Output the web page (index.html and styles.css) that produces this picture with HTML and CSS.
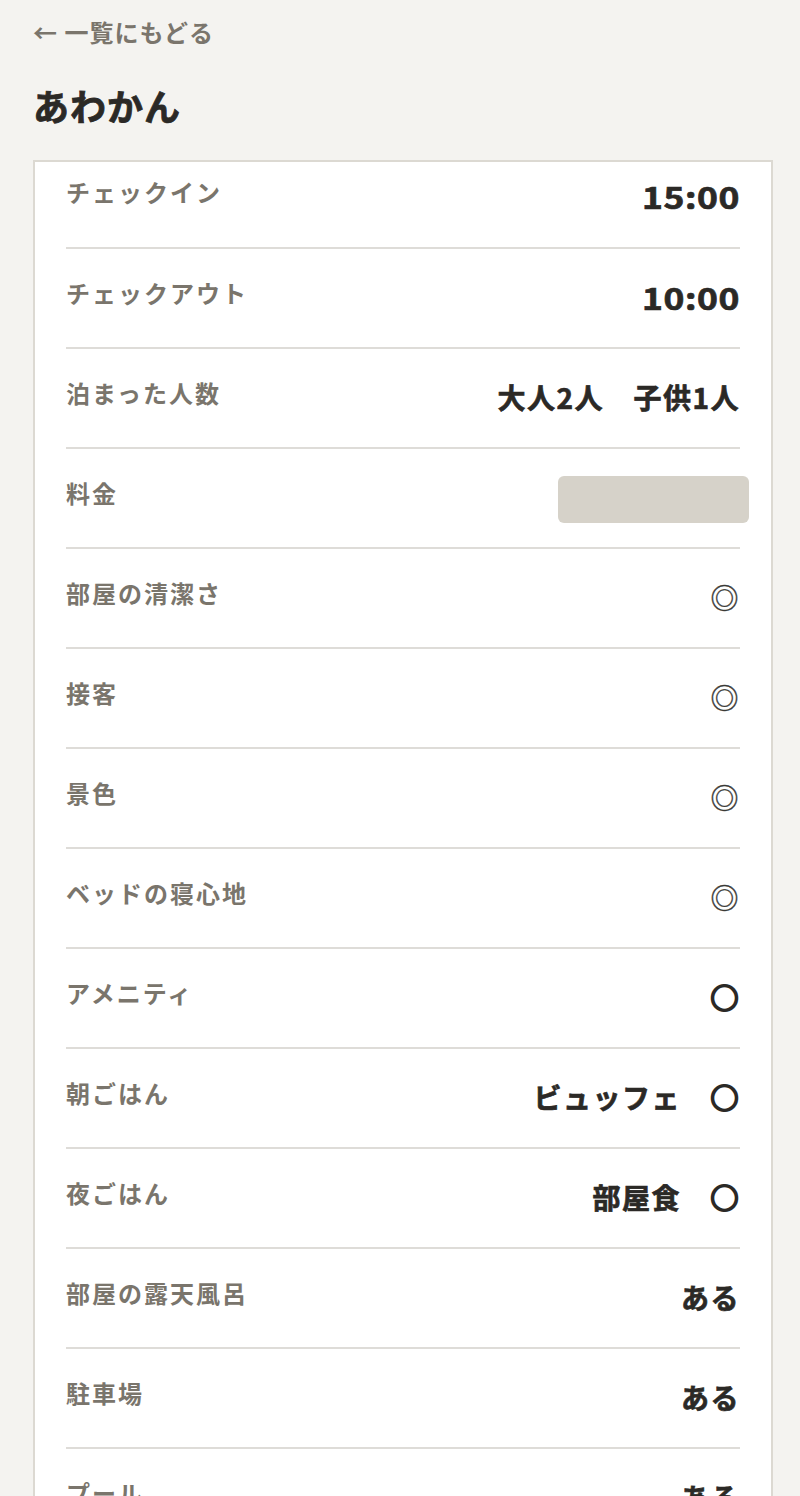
FILE: index.html
```html
<!DOCTYPE html>
<html lang="ja">
<head>
    <meta charset="utf-8">
    <title>あわかん</title>
    <meta name="viewport" content="width=device-width, initial-scale=1">
    <link rel="stylesheet" href="styles.css">
</head>
<body>
    <a class="back" href="#">← 一覧にもどる</a>
    <h1 class="title">あわかん</h1>

    <div class="card">
        <div class="row">
            <div class="label">チェックイン</div>
            <div class="value num">15:00</div>
        </div>
        <div class="row">
            <div class="label">チェックアウト</div>
            <div class="value num">10:00</div>
        </div>
        <div class="row">
            <div class="label">泊まった人数</div>
            <div class="value">大人2人　子供1人</div>
        </div>
        <div class="row">
            <div class="label">料金</div>
            <div class="price-hidden"></div>
        </div>
        <div class="row">
            <div class="label">部屋の清潔さ</div>
            <div class="value mark-double">◎</div>
        </div>
        <div class="row">
            <div class="label">接客</div>
            <div class="value mark-double">◎</div>
        </div>
        <div class="row">
            <div class="label">景色</div>
            <div class="value mark-double">◎</div>
        </div>
        <div class="row">
            <div class="label">ベッドの寝心地</div>
            <div class="value mark-double">◎</div>
        </div>
        <div class="row">
            <div class="label">アメニティ</div>
            <div class="value"><span class="mark">○</span></div>
        </div>
        <div class="row">
            <div class="label">朝ごはん</div>
            <div class="value">ビュッフェ　<span class="mark">○</span></div>
        </div>
        <div class="row">
            <div class="label">夜ごはん</div>
            <div class="value">部屋食　<span class="mark">○</span></div>
        </div>
        <div class="row">
            <div class="label">部屋の露天風呂</div>
            <div class="value">ある</div>
        </div>
        <div class="row">
            <div class="label">駐車場</div>
            <div class="value">ある</div>
        </div>
        <div class="row">
            <div class="label">プール</div>
            <div class="value">ある</div>
        </div>
    </div>
</body>
</html>
```

FILE: styles.css
```css
* {
    box-sizing: border-box;
}

body {
    margin: 0;
    padding: 0 27px 40px 33px;
    background: #f4f3f0;
    font-family: "Noto Sans CJK JP", "Noto Sans", sans-serif;
    color: #2b2926;
}

.back {
    display: block;
    padding-top: 14px;
    font-size: 24px;
    line-height: 36px;
    font-weight: 700;
    letter-spacing: 1px;
    color: #7a756c;
    text-decoration: none;
}

.title {
    margin: 30px 0 30px;
    font-size: 36px;
    line-height: 50px;
    font-weight: 700;
    letter-spacing: 1px;
    -webkit-text-stroke: 0.8px #2b2926;
}

.card {
    background: #fff;
    border: 2px solid #dcd9d2;
    padding: 0 31px;
}

.row {
    display: flex;
    justify-content: space-between;
    align-items: flex-start;
    height: 100px;
    padding-top: 26px;
    border-bottom: 2px solid #dedcd8;
}

.row:first-child {
    height: 87px;
    padding-top: 12px;
}

.label {
    font-size: 24px;
    line-height: 36px;
    font-weight: 700;
    letter-spacing: 2px;
    color: #7a756c;
}

.value {
    margin-top: 4px;
    font-size: 28px;
    line-height: 36px;
    font-weight: 700;
    letter-spacing: 1.5px;
    white-space: nowrap;
    -webkit-text-stroke: 0.7px #2b2926;
}

.num {
    font-size: 30px;
    letter-spacing: 0.5px;
    transform: scaleX(1.18);
    transform-origin: right center;
}

.mark {
    -webkit-text-stroke: 2.2px #2b2926;
}

.mark-double {
    font-weight: 400;
    color: #3a3936;
    -webkit-text-stroke: 0.4px #3a3936;
}

.price-hidden {
    width: 191px;
    height: 47px;
    margin: 1px -9px 0 0;
    background: #d6d2c9;
    border-radius: 6px;
}
```
